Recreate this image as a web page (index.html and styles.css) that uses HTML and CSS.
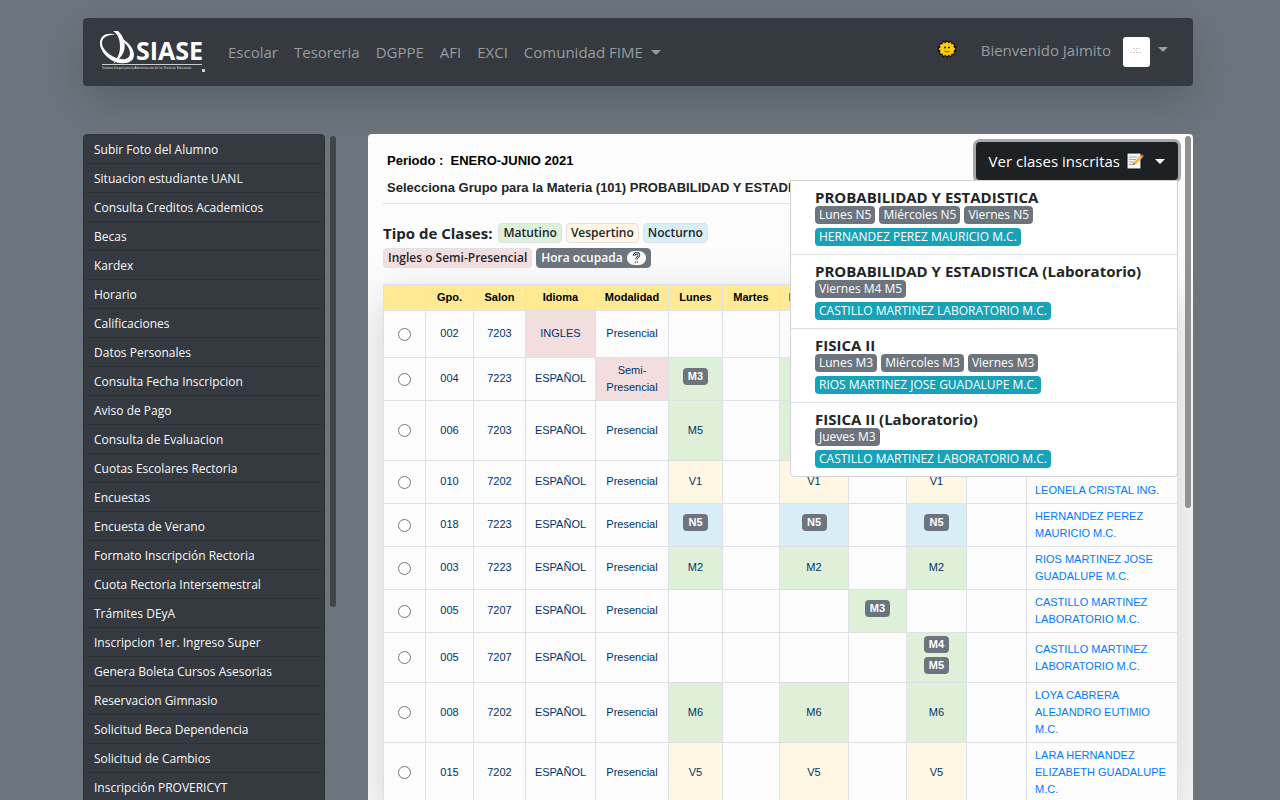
FILE: index.html
```html
<!DOCTYPE html>
<html lang="es">
<head>
<meta charset="utf-8">
<meta name="viewport" content="width=device-width, initial-scale=1">
<title>SIASE</title>
<link rel="stylesheet" href="styles.css">
</head>
<body>
<div class="page">
  <header class="topbar">
    <a class="brand" href="#" aria-label="SIASE">
      <svg width="108" height="42" viewBox="0 0 108 42">
        <path fill="#fff" fill-rule="evenodd" d="M17 4C9 1 1 4 1 12c0 9 10 19 20 20 8 1 14-2 14-8C35 16 26 8 19 6c7 5 12 11 12 16 0 5-4 7-9 6C13 27 3 19 3 12c0-6 7-9 14-8z"/>
        <path fill="#fff" d="M14 0h5c7 6 9 17 4 24-2 3-5 6-9 9 4-5 7-10 7-17 0-8-2-13-7-16z"/>
        <path stroke="#ccc" d="M3 33.500H103"/>
        <text class="brand-name" x="37" y="29">SIASE</text>
        <text class="brand-sub" x="3" y="38">Sistema Integral para la Administración de los Servicios Educativos</text>
        <rect x="103" y="38" width="3" height="3" fill="#ccc"/>
      </svg>
    </a>
    <nav class="nav">
      <a href="#">Escolar</a><a href="#">Tesoreria</a><a href="#">DGPPE</a><a href="#">AFI</a><a href="#">EXCI</a><a href="#">Comunidad FIME<span class="caret"></span></a>
    </nav>
    <div class="user">
      <button class="theme" type="button" aria-label="Tema">
        <svg width="20" height="20" viewBox="0 0 20 20">
          <path d="M10 1l1.500 2L14 1.500l.8 2.700 2.900-.2-.2 2.800L20 8l-1.500 2 1.500 2-2.500 1.200.2 2.800-2.900-.2L14 18.500 11.500 17 10 19l-1.500-2L6 18.500l-.8-2.700-2.900.2.2-2.800L0 12l1.500-2L0 8l2.500-1.200L2.300 4l2.900.2L6 1.500 8.500 3z" fill="#111"/>
          <path d="M10 3l1.500 1.500 2-1 .7 2 2.300.2-.3 2.200L18 10l-1.800 2 .3 2.300-2.300.2-.7 2-2-1L10 17l-1.500-1.500-2 1-.7-2-2.300-.2.300-2.300L2 10l1.800-2-.3-2.300 2.300-.2.700-2 2 1z" fill="#ffce0a" stroke="#ffb800" stroke-width=".8"/>
          <circle cx="8" cy="8.500" r="1" fill="#222"/><circle cx="12" cy="8.500" r="1" fill="#222"/>
          <path d="M7.500 12q2.500 2 5 0" fill="none" stroke="#7a4a00"/>
        </svg>
      </button>
      <a class="profile" href="#"><span>Bienvenido Jaimito</span>
        <svg class="avatar" width="27" height="30" viewBox="0 0 27 30"><rect width="27" height="30" rx="3" fill="#fff"/><path d="M10 11.500h7M12 13.500h3M7 15.500h12" stroke="#ccc" stroke-dasharray="2 1"/></svg>
        <span class="caret"></span></a>
    </div>
  </header>

  <div class="columns">
    <aside class="side">
      <nav class="menu">
        <a href="#">Subir Foto del Alumno</a>
        <a href="#">Situacion estudiante UANL</a>
        <a href="#">Consulta Creditos Academicos</a>
        <a href="#">Becas</a>
        <a href="#">Kardex</a>
        <a href="#">Horario</a>
        <a href="#">Calificaciones</a>
        <a href="#">Datos Personales</a>
        <a href="#">Consulta Fecha Inscripcion</a>
        <a href="#">Aviso de Pago</a>
        <a href="#">Consulta de Evaluacion</a>
        <a href="#">Cuotas Escolares Rectoria</a>
        <a href="#">Encuestas</a>
        <a href="#">Encuesta de Verano</a>
        <a href="#">Formato Inscripción Rectoria</a>
        <a href="#">Cuota Rectoria Intersemestral</a>
        <a href="#">Trámites DEyA</a>
        <a href="#">Inscripcion 1er. Ingreso Super</a>
        <a href="#">Genera Boleta Cursos Asesorias</a>
        <a href="#">Reservacion Gimnasio</a>
        <a href="#">Solicitud Beca Dependencia</a>
        <a href="#">Solicitud de Cambios</a>
        <a href="#">Inscripción PROVERICYT</a>
      </nav>
      <div class="track"><div class="thumb thumb-side"></div></div>
    </aside>

    <main class="panel">
      <div class="content">
        <div class="heading">
          <div class="titles">
            <p class="period">Periodo :&nbsp; ENERO-JUNIO 2021</p>
            <h1>Selecciona Grupo para la Materia (101) PROBABILIDAD Y ESTADISTICA</h1>
          </div>
          <div class="dropdown">
            <button class="toggle" type="button">Ver clases inscritas
              <svg width="18" height="18" viewBox="0 0 18 18">
                <path d="M1 1h14v16H1z" fill="#f4f4f4" stroke="#111"/>
                <path d="M3 5h8M3 7.500h7M3 10h6M3 12.500h5" stroke="#aaa"/>
                <path d="M7 13l1-3 7-7 2 2-7 7z" fill="#f5b942"/><path d="M15 3l1-1 2 2-1 1z" fill="#d9534f"/><path d="M7 13l1-2 1 1z" fill="#222"/>
              </svg>
              <span class="caret"></span>
            </button>
            <ul class="enrolled">
              <li><h2>PROBABILIDAD Y ESTADISTICA</h2>
                <div class="tags"><span>Lunes N5</span><span>Miércoles N5</span><span>Viernes N5</span></div>
                <div class="tags teacher"><span>HERNANDEZ PEREZ MAURICIO M.C.</span></div></li>
              <li><h2>PROBABILIDAD Y ESTADISTICA (Laboratorio)</h2>
                <div class="tags"><span>Viernes M4 M5</span></div>
                <div class="tags teacher"><span>CASTILLO MARTINEZ LABORATORIO M.C.</span></div></li>
              <li><h2>FISICA II</h2>
                <div class="tags"><span>Lunes M3</span><span>Miércoles M3</span><span>Viernes M3</span></div>
                <div class="tags teacher"><span>RIOS MARTINEZ JOSE GUADALUPE M.C.</span></div></li>
              <li><h2>FISICA II (Laboratorio)</h2>
                <div class="tags"><span>Jueves M3</span></div>
                <div class="tags teacher"><span>CASTILLO MARTINEZ LABORATORIO M.C.</span></div></li>
            </ul>
          </div>
        </div>

        <div class="legend-row">
          <div class="legend">
            <strong>Tipo de Clases:</strong>
            <span class="key green">Matutino</span>
            <span class="key cream">Vespertino</span>
            <span class="key blue">Nocturno</span>
            <span class="key pink">Ingles o Semi-Presencial</span>
            <span class="key busy">Hora ocupada
              <svg width="19" height="14" viewBox="0 0 19 14"><rect width="19" height="14" rx="7" fill="#f8f9fa"/><path d="M7 5c0-3.500 5-3.500 5-1 0 2-2.500 2-2.500 4.500M9.500 10.500v1.500" fill="none" stroke="#222" stroke-width="2.400"/><path d="M7 5c0-3.500 5-3.500 5-1 0 2-2.500 2-2.500 4.500M9.500 10.500v1.500" fill="none" stroke="#fff"/></svg>
            </span>
          </div>
          <span class="dot"></span>
        </div>

        <table class="groups">
          <colgroup><col class="c1"><col class="c2"><col class="c3"><col class="c4"><col class="c5"><col class="c6"><col class="c7"><col class="c8"><col class="c9"><col class="c10"><col class="c10"><col></colgroup>
          <thead><tr><th></th><th>Gpo.</th><th>Salon</th><th>Idioma</th><th>Modalidad</th><th>Lunes</th><th>Martes</th><th>Miércoles</th><th>Jueves</th><th>Viernes</th><th>Sabado</th><th>Maestro</th></tr></thead>
          <tbody>
            <tr class="first"><td><input type="radio" name="g" aria-label="Grupo 002"></td><td>002</td><td>7203</td><td class="pink">INGLES</td><td>Presencial</td><td></td><td></td><td></td><td></td><td></td><td></td><td></td></tr>
            <tr><td><input type="radio" name="g" aria-label="Grupo 004"></td><td>004</td><td>7223</td><td>ESPAÑOL</td><td class="pink">Semi-Presencial</td><td class="green"><b>M3</b></td><td></td><td class="green"></td><td></td><td class="green"></td><td></td><td></td></tr>
            <tr class="tall"><td><input type="radio" name="g" aria-label="Grupo 006"></td><td>006</td><td>7203</td><td>ESPAÑOL</td><td>Presencial</td><td class="green">M5</td><td></td><td class="green"></td><td></td><td class="green"></td><td></td><td></td></tr>
            <tr><td><input type="radio" name="g" aria-label="Grupo 010"></td><td>010</td><td>7202</td><td>ESPAÑOL</td><td>Presencial</td><td class="cream">V1</td><td></td><td class="cream">V1</td><td></td><td class="cream">V1</td><td></td><td><a href="#">DE LEON MEDELLIN LEONELA CRISTAL ING.</a></td></tr>
            <tr><td><input type="radio" name="g" aria-label="Grupo 018"></td><td>018</td><td>7223</td><td>ESPAÑOL</td><td>Presencial</td><td class="blue"><b>N5</b></td><td></td><td class="blue"><b>N5</b></td><td></td><td class="blue"><b>N5</b></td><td></td><td><a href="#">HERNANDEZ PEREZ MAURICIO M.C.</a></td></tr>
            <tr><td><input type="radio" name="g" aria-label="Grupo 003"></td><td>003</td><td>7223</td><td>ESPAÑOL</td><td>Presencial</td><td class="green">M2</td><td></td><td class="green">M2</td><td></td><td class="green">M2</td><td></td><td><a href="#">RIOS MARTINEZ JOSE GUADALUPE M.C.</a></td></tr>
            <tr><td><input type="radio" name="g" aria-label="Grupo 005, jueves"></td><td>005</td><td>7207</td><td>ESPAÑOL</td><td>Presencial</td><td></td><td></td><td></td><td class="green"><b>M3</b></td><td></td><td></td><td><a href="#">CASTILLO MARTINEZ LABORATORIO M.C.</a></td></tr>
            <tr class="double"><td><input type="radio" name="g" aria-label="Grupo 005, viernes"></td><td>005</td><td>7207</td><td>ESPAÑOL</td><td>Presencial</td><td></td><td></td><td></td><td></td><td class="green"><b>M4</b><b>M5</b></td><td></td><td><a href="#">CASTILLO MARTINEZ LABORATORIO M.C.</a></td></tr>
            <tr class="tall"><td><input type="radio" name="g" aria-label="Grupo 008"></td><td>008</td><td>7202</td><td>ESPAÑOL</td><td>Presencial</td><td class="green">M6</td><td></td><td class="green">M6</td><td></td><td class="green">M6</td><td></td><td><a href="#">LOYA CABRERA ALEJANDRO EUTIMIO M.C.</a></td></tr>
            <tr class="tall"><td><input type="radio" name="g" aria-label="Grupo 015"></td><td>015</td><td>7202</td><td>ESPAÑOL</td><td>Presencial</td><td class="cream">V5</td><td></td><td class="cream">V5</td><td></td><td class="cream">V5</td><td></td><td><a href="#">LARA HERNANDEZ ELIZABETH GUADALUPE M.C.</a></td></tr>
          </tbody>
        </table>
      </div>
      <div class="track"><div class="thumb thumb-main"></div></div>
    </main>
  </div>
</div>
</body>
</html>
```
FILE: styles.css
```css
* { box-sizing: border-box; }
body {
  margin: 0;
  background: #6c757d;
  color: #212529;
  font: 15px/24px "Open Sans", "Noto Sans", sans-serif;
}
a { text-decoration: none; }
p, h1, h2, ul { margin: 0; padding: 0; }
ul { list-style: none; }
.page {
  display: flex;
  flex-direction: column;
  gap: 48px;
  height: 100vh;
  max-width: 1144px;
  margin: 0 auto;
  padding: 18px 19px 0 15px;
}
.caret {
  display: inline-block;
  border: 5px solid transparent;
  border-top-color: currentColor;
  border-bottom: 0;
  vertical-align: 3px;
}

/* top bar */
.topbar {
  display: flex;
  flex: none;
  align-items: center;
  height: 68px;
  padding: 0 25px 0 16px;
  border-radius: 4px;
  background: #343a40;
  box-shadow: 0 16px 48px rgba(0, 0, 0, .175);
}
.brand { display: flex; }
.brand-name { font: 700 25px "Open Sans", sans-serif; fill: #fff; }
.brand-sub { font: 3px "Liberation Sans", sans-serif; fill: #ddd; }
.nav { display: flex; flex: 1; gap: 16px; margin-left: 21px; color: #999c9f; }
.nav a, .profile { color: #999c9f; white-space: nowrap; }
.nav .caret { margin-left: 8px; }
.user { display: flex; align-items: center; gap: 24px; }
.theme { display: flex; padding: 0 0 6px; border: 0; background: none; }
.profile { display: flex; align-items: center; gap: 8px; }
.profile span:first-child { margin-right: 4px; padding-bottom: 4px; }
.profile .caret { margin-bottom: 5px; }

/* columns */
.columns { display: flex; flex: 1; gap: 32px; min-height: 0; position: relative; }
.side { display: flex; flex: none; gap: 5px; width: 253px; overflow: hidden; }
.menu { flex: 1; }
.menu a {
  display: block;
  height: 29px;
  padding: 0 10px;
  border: 1px solid #2e3338;
  border-top: 0;
  background: #343a40;
  color: #f8f9fa;
  font: 12px/29px "Open Sans", sans-serif;
  white-space: nowrap;
}
.menu a:first-child { border-top: 1px solid #2e3338; border-radius: 4px 4px 0 0; height: 30px; }
.track { flex: none; width: 6px; padding-top: 2px; }
.thumb { border-radius: 3px; }
.thumb-side { height: 71%; background: #414649; }
.thumb-main { height: 56%; background: #929292; }

/* main panel */
.panel {
  display: flex;
  flex: 1;
  gap: 7px;
  min-width: 0;
  padding: 0 2px 0 15px;
  border-radius: 4px 4px 0 0;
  background: #fcfcfc;
  overflow: hidden;
}
.content { flex: 1; min-width: 0; }
.heading {
  display: flex;
  height: 70px;
  border-bottom: 1px solid #dee2e6;
}
.titles { flex: 1; width: 0; padding: 16px 0 0 4px; white-space: nowrap; overflow: hidden; }
.period, h1 { font: bold 13px/22px "Liberation Sans", sans-serif; color: #000; }
h1 { color: #212529; padding-top: 5px; }
.dropdown { position: relative; flex: none; padding-top: 8px; }
.toggle {
  display: flex;
  align-items: center;
  gap: 6px;
  height: 38px;
  padding: 0 13px;
  border: 0;
  border-radius: 4px;
  background: #1d2124;
  color: #fff;
  font: 15px/24px "Open Sans", sans-serif;
  box-shadow: 0 0 0 3px #a5a8aa;
}
.toggle .caret { margin-left: 5px; }
.enrolled {
  position: absolute;
  z-index: 2;
  top: 46px;
  right: 0;
  width: 388px;
  border: 1px solid #d3d3d3;
  border-radius: 0 0 4px 4px;
  background: #fff;
}
.enrolled li { height: 74px; padding: 7px 24px 0; border-bottom: 1px solid #dee2e6; }
.enrolled li:last-child { height: 73px; border-bottom: 0; }
.enrolled h2 { font: 700 15px/18px "Open Sans", sans-serif; white-space: nowrap; }
.tags { display: flex; gap: 4px; }
.tags span {
  height: 18px;
  padding: 0 4px;
  border-radius: 4px;
  background: #6c757d;
  color: #fff;
  font: 12px/18px "Open Sans", sans-serif;
  white-space: nowrap;
}
.teacher { margin-top: 4px; }
.teacher span { background: #17a2b8; }

.legend-row { display: flex; justify-content: space-between; height: 80px; padding-top: 17px; }
.legend { display: flex; flex-wrap: wrap; align-content: flex-start; align-items: center; gap: 3px 4px; width: 350px; }
.legend strong { margin-right: 2px; font-size: 15px; line-height: 24px; }
.key {
  display: flex;
  align-items: center;
  gap: 4px;
  height: 20px;
  padding: 0 4px;
  border: 1px solid #dee2e6;
  border-radius: 4px;
  font: 600 12px/18px "Open Sans", sans-serif;
}
.green { background: #dff0d8; }
.cream { background: #fff7e3; }
.blue { background: #d9edf7; }
.pink { background: #f2dede; }
.busy { border-color: #6c757d; background: #6c757d; color: #fff; }
.dot { width: 12px; height: 12px; margin-top: 16px; border-radius: 50%; background: #007bff; }

.groups {
  width: 100%;
  table-layout: fixed;
  border-collapse: collapse;
  background: #fcfcfc;
  box-shadow: 0 16px 48px rgba(0, 0, 0, .175);
  color: #036;
  font: 11px/17px "Liberation Sans", sans-serif;
}
.groups th, .groups td { padding: 0 4px; border: 1px solid #dee2e6; text-align: center; }
.groups td { padding-bottom: 1px; }
.groups th { height: 26px; background: #ffe993; color: #000; font-weight: bold; }
.groups tr { height: 43px; }
.groups thead tr { height: 26px; }
.groups .first { height: 47px; }
.groups .double { height: 50px; }
.groups .tall { height: 60px; }
.groups td:last-child { padding: 0 8px; text-align: left; }
.groups a { color: #007bff; }
.groups input { width: 13px; height: 13px; margin: 0; vertical-align: middle; }
.groups b {
  display: block;
  width: 25px;
  margin: 0 auto 4px;
  border-radius: 4px;
  background: #6c757d;
  color: #fff;
}
.c1 { width: 42px; }
.c2 { width: 48px; }
.c3 { width: 52px; }
.c4 { width: 70px; }
.c5 { width: 73px; }
.c6 { width: 54px; }
.c7 { width: 57px; }
.c8 { width: 69px; }
.c9 { width: 58px; }
.c10 { width: 60px; }
```
